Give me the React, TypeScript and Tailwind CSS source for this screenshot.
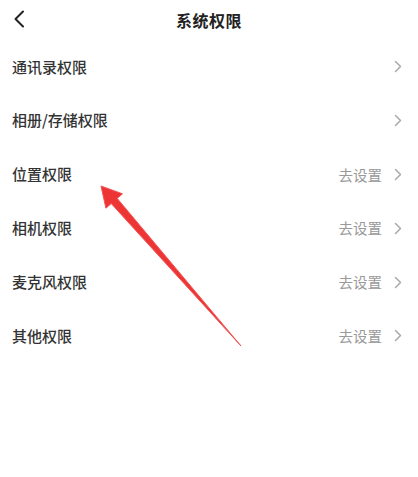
import * as React from 'react';

const rows: { label: string; action?: string }[] = [
  { label: '通讯录权限' },
  { label: '相册/存储权限' },
  { label: '位置权限', action: '去设置' },
  { label: '相机权限', action: '去设置' },
  { label: '麦克风权限', action: '去设置' },
  { label: '其他权限', action: '去设置' },
];

function Chevron({ className }: { className?: string }) {
  return (
    <svg width="8" height="13" viewBox="0 0 8 13" className={className}>
      <path d="M1.5 1.5 L6.5 6.5 L1.5 11.5" fill="none" stroke="currentColor" strokeWidth="1.5" strokeLinecap="round" strokeLinejoin="round" />
    </svg>
  );
}

export default function App() {
  return (
    <div
      className="relative w-[418px] h-[477px] bg-white overflow-hidden"
      style={{ fontFamily: '"Noto Sans CJK SC", "Noto Sans", sans-serif' }}
    >
      <header className="relative flex items-center justify-center h-[40px]">
        <svg width="12" height="18" viewBox="0 0 12 18" className="absolute left-[13px] top-[10px] text-[#222]">
          <path d="M10 1.5 L2.5 9 L10 16.5" fill="none" stroke="currentColor" strokeWidth="2" strokeLinecap="round" strokeLinejoin="round" />
        </svg>
        <h1 className="text-[16px] font-bold text-[#222] tracking-[0.5px]">系统权限</h1>
      </header>

      <ul>
        {rows.map((r) => (
          <li key={r.label} className="flex items-center justify-between h-[53.8px] pl-[12px] pr-[16px]">
            <span className="text-[15px] font-medium text-[#333]">{r.label}</span>
            <span className="flex items-center gap-[12px] text-[#aaa]">
              {r.action && <span className="text-[14.5px] text-[#999]">{r.action}</span>}
              <Chevron className="text-[#aaa]" />
            </span>
          </li>
        ))}
      </ul>

      <svg className="absolute inset-0 pointer-events-none" width="418" height="477" viewBox="0 0 418 477">
        <polygon
          points="101,186 122.5,193.8 117.2,198.4 241,346 111.2,203.6 105.9,208.2"
          fill="#ee3535"
          stroke="#f25555"
          strokeWidth="1"
          strokeLinejoin="round"
        />
      </svg>
    </div>
  );
}
